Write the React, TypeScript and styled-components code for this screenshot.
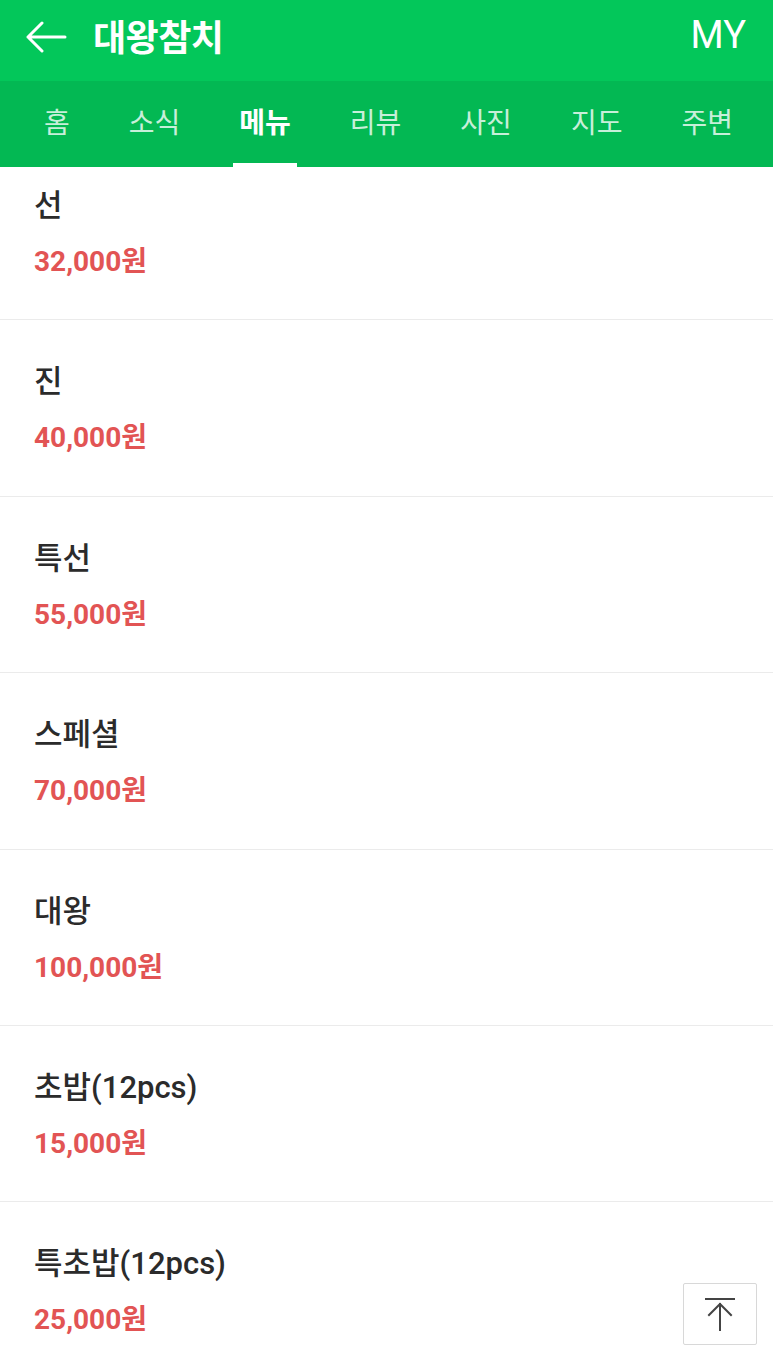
import React from 'react';
import styled, { createGlobalStyle } from 'styled-components';

const GlobalStyle = createGlobalStyle`
  html, body {
    margin: 0;
    padding: 0;
    background: #fff;
    overflow: hidden;
  }
  body {
    font-family: Roboto, "Noto Sans CJK KR", "Noto Sans", sans-serif;
  }
`;

const tabs = ['홈', '소식', '메뉴', '리뷰', '사진', '지도', '주변'];

const menu = [
  { name: '선', price: '32,000원' },
  { name: '진', price: '40,000원' },
  { name: '특선', price: '55,000원' },
  { name: '스페셜', price: '70,000원' },
  { name: '대왕', price: '100,000원' },
  { name: '초밥(12pcs)', price: '15,000원' },
  { name: '특초밥(12pcs)', price: '25,000원' },
];

const App: React.FC = () => {
  return (
    <Page>
      <GlobalStyle />
      <Header>
        <TopBar>
          <BackButton aria-label="back">
            <svg width="42" height="32" viewBox="0 0 42 32" fill="none">
              <path d="M40 16H3M17 2L3 16l14 14" stroke="#fff" strokeWidth="3" strokeLinecap="round" strokeLinejoin="round" />
            </svg>
          </BackButton>
          <Title>대왕참치</Title>
          <MyLink>MY</MyLink>
        </TopBar>
        <TabBar>
          {tabs.map((t) => (
            <Tab key={t} $active={t === '메뉴'}>
              {t}
            </Tab>
          ))}
        </TabBar>
      </Header>
      <MenuList>
        {menu.map((m) => (
          <MenuRow key={m.name}>
            <MenuName>{m.name}</MenuName>
            <MenuPrice>{m.price}</MenuPrice>
          </MenuRow>
        ))}
      </MenuList>
      <TopButton aria-label="top">
        <svg width="34" height="36" viewBox="0 0 34 36" fill="none">
          <path d="M3 3h28M17 34V8M6 19L17 8l11 11" stroke="#444" strokeWidth="2" strokeLinecap="square" />
        </svg>
      </TopButton>
    </Page>
  );
};

const Page = styled.div`
  width: 773px;
  height: 1349px;
  overflow: hidden;
  position: relative;
  background: #fff;
`;

const Header = styled.header`
  position: relative;
  z-index: 2;
`;

const TopBar = styled.div`
  height: 81px;
  background: #03c75a;
  display: flex;
  align-items: center;
  padding: 0 27px 0 25px;
`;

const BackButton = styled.div`
  display: flex;
  align-items: center;
  margin-right: 26px;
  padding-bottom: 8px;
`;

const Title = styled.h1`
  margin: 0;
  flex: 1;
  color: #fff;
  font-size: 36px;
  font-weight: 700;
  letter-spacing: -0.5px;
  padding-bottom: 12px;
`;

const MyLink = styled.span`
  color: #fff;
  font-size: 38px;
  font-weight: 400;
  padding-bottom: 12px;
`;

const TabBar = styled.nav`
  height: 86px;
  background: #03b853;
  display: flex;
  align-items: stretch;
  padding-left: 14.5px;
`;

const Tab = styled.div<{ $active?: boolean }>`
  position: relative;
  display: flex;
  align-items: center;
  padding: 0 29.5px 6px;
  font-size: 28px;
  font-family: "Noto Sans CJK KR", sans-serif;
  font-weight: ${(p) => (p.$active ? 700 : 400)};
  color: ${(p) => (p.$active ? '#fff' : 'rgba(255, 255, 255, 0.8)')};
  &::after {
    content: '';
    display: ${(p) => (p.$active ? 'block' : 'none')};
    position: absolute;
    left: 23.5px;
    right: 23.5px;
    bottom: 0;
    height: 4px;
    background: #fff;
  }
`;

const MenuList = styled.ul`
  list-style: none;
  margin: -23px 0 0;
  padding: 0;
  position: relative;
  z-index: 1;
`;

const MenuRow = styled.li`
  height: 176.4px;
  box-sizing: border-box;
  padding: 42px 34px 0;
  border-bottom: 1px solid #ebebeb;
  display: flex;
  flex-direction: column;
  gap: 18px;
`;

const MenuName = styled.div`
  font-size: 31px;
  font-weight: 500;
  color: #2b2b2b;
  line-height: 40px;
`;

const MenuPrice = styled.div`
  font-size: 28px;
  font-weight: 700;
  color: #e25454;
  line-height: 36px;
`;

const TopButton = styled.div`
  position: absolute;
  right: 16px;
  bottom: 4px;
  width: 74px;
  height: 62px;
  box-sizing: border-box;
  background: #fff;
  border: 1px solid #d8d8d8;
  border-radius: 2px;
  display: flex;
  align-items: center;
  justify-content: center;
  z-index: 3;
`;

export default App;
